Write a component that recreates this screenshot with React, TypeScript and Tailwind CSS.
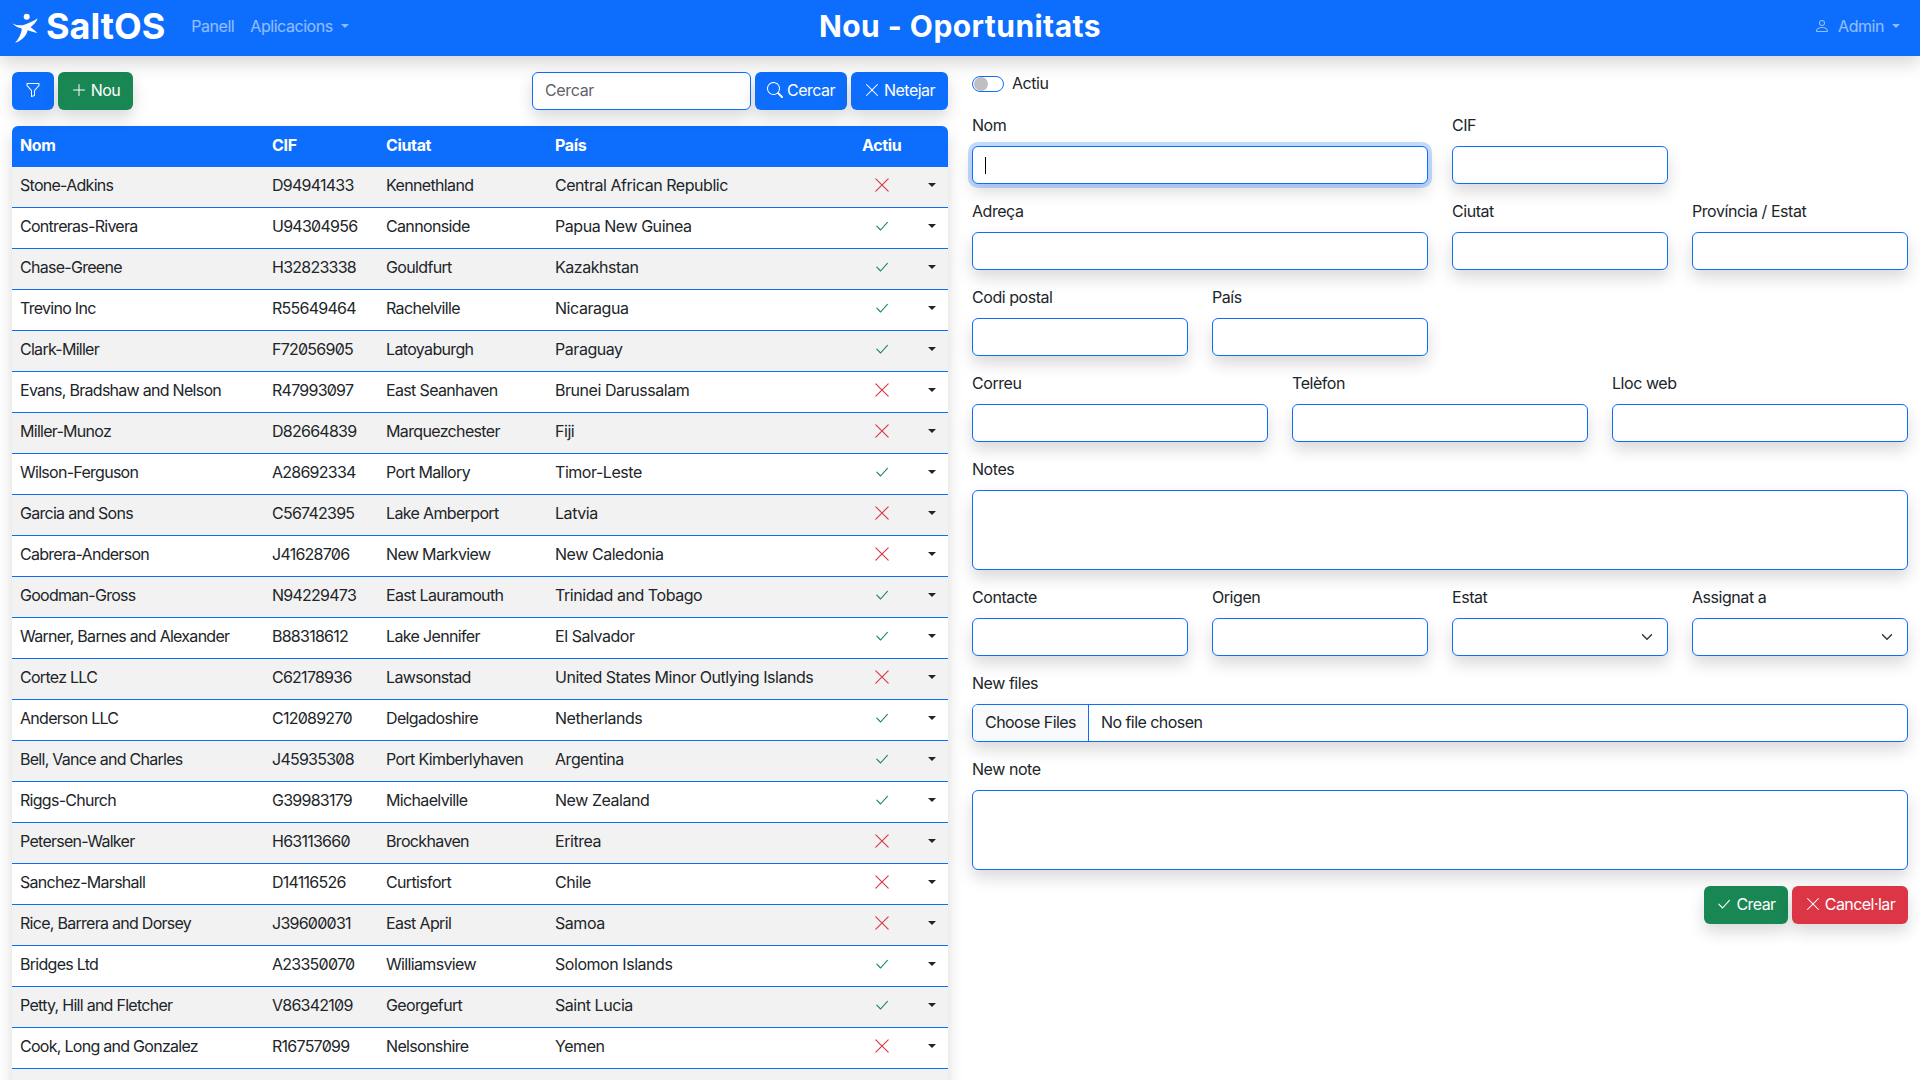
import React from "react";

const rows: [string, string, string, string, boolean][] = [
  ["Stone-Adkins", "D94941433", "Kennethland", "Central African Republic", false],
  ["Contreras-Rivera", "U94304956", "Cannonside", "Papua New Guinea", true],
  ["Chase-Greene", "H32823338", "Gouldfurt", "Kazakhstan", true],
  ["Trevino Inc", "R55649464", "Rachelville", "Nicaragua", true],
  ["Clark-Miller", "F72056905", "Latoyaburgh", "Paraguay", true],
  ["Evans, Bradshaw and Nelson", "R47993097", "East Seanhaven", "Brunei Darussalam", false],
  ["Miller-Munoz", "D82664839", "Marquezchester", "Fiji", false],
  ["Wilson-Ferguson", "A28692334", "Port Mallory", "Timor-Leste", true],
  ["Garcia and Sons", "C56742395", "Lake Amberport", "Latvia", false],
  ["Cabrera-Anderson", "J41628706", "New Markview", "New Caledonia", false],
  ["Goodman-Gross", "N94229473", "East Lauramouth", "Trinidad and Tobago", true],
  ["Warner, Barnes and Alexander", "B88318612", "Lake Jennifer", "El Salvador", true],
  ["Cortez LLC", "C62178936", "Lawsonstad", "United States Minor Outlying Islands", false],
  ["Anderson LLC", "C12089270", "Delgadoshire", "Netherlands", true],
  ["Bell, Vance and Charles", "J45935308", "Port Kimberlyhaven", "Argentina", true],
  ["Riggs-Church", "G39983179", "Michaelville", "New Zealand", true],
  ["Petersen-Walker", "H63113660", "Brockhaven", "Eritrea", false],
  ["Sanchez-Marshall", "D14116526", "Curtisfort", "Chile", false],
  ["Rice, Barrera and Dorsey", "J39600031", "East April", "Samoa", false],
  ["Bridges Ltd", "A23350070", "Williamsview", "Solomon Islands", true],
  ["Petty, Hill and Fletcher", "V86342109", "Georgefurt", "Saint Lucia", true],
  ["Cook, Long and Gonzalez", "R16757099", "Nelsonshire", "Yemen", false],
];

const X = ({ s = 16, c = "currentColor" }: { s?: number; c?: string }) => (
  <svg width={s} height={s} viewBox="0 0 16 16" fill={c}>
    <path d="M2.146 2.854a.5.5 0 1 1 .708-.708L8 7.293l5.146-5.147a.5.5 0 0 1 .708.708L8.707 8l5.147 5.146a.5.5 0 0 1-.708.708L8 8.707l-5.146 5.147a.5.5 0 0 1-.708-.708L7.293 8 2.146 2.854Z" />
  </svg>
);
const Check = ({ s = 16, c = "currentColor" }: { s?: number; c?: string }) => (
  <svg width={s} height={s} viewBox="0 0 16 16" fill="none" stroke={c} strokeWidth="1.1" strokeLinecap="round" strokeLinejoin="round">
    <path d="M2.8 8.2 6.6 12 13.4 4.4" />
  </svg>
);
const Caret = ({ color = "#212529" }: { color?: string }) => (
  <span className="inline-block w-0 h-0 border-x-[4.8px] border-x-transparent border-t-[4.8px]" style={{ borderTopColor: color }} />
);

const shadow = "shadow-[0_8px_16px_rgba(0,0,0,0.15)]";
const ctl = `w-full h-[38px] block bg-white border border-[#0d6efd] rounded-md ${shadow}`;

const Field = ({ label, span, children }: { label: string; span: string; children?: React.ReactNode }) => (
  <div className={`${span} mb-4`}>
    <div className="h-6 mb-2 leading-[22px]">{label}</div>
    {children ?? <div className={ctl} />}
  </div>
);

const Select = () => (
  <div className={`${ctl} flex items-center justify-end pr-[14px]`}>
    <svg width="12" height="12" viewBox="0 0 16 16" fill="none" stroke="#343a40" strokeWidth="2" strokeLinecap="round" strokeLinejoin="round">
      <path d="m2 5 6 6 6-6" />
    </svg>
  </div>
);

const Btn = ({ bg, children, w }: { bg: string; children: React.ReactNode; w: string }) => (
  <button className={`h-[38px] ${w} ${bg} ${shadow} rounded-md text-white flex items-center justify-center pb-[2px] tracking-[-0.55px]`}>{children}</button>
);

export default function App() {
  return (
    <div className="h-screen overflow-hidden bg-white text-[#212529] text-[16px] tracking-[-0.45px] slashed-zero" style={{ fontFamily: "Inter, 'Noto Sans', sans-serif" }}>
      <nav className={`relative z-10 h-14 bg-[#0d6efd] ${shadow} grid grid-cols-[1fr_auto_1fr] items-center pl-3 pr-3 pb-[4px]`}>
        <div className="flex items-center">
          <svg width="30" height="32" viewBox="0 0 30 32" fill="white" className="mr-[4px] mt-[4px]">
            <circle cx="14.7" cy="4.7" r="3" />
            <path d="M0.5 11.4 C5 13.6 9 13.8 13 12.4 C17 11 22 9.2 25.7 6.3 C24.5 10 21.5 13 18.6 15.2 C21 17 23.4 18.8 25.4 21 C22.4 20.4 18.6 19.4 15.6 18.2 C14.6 23.6 10 28.6 3 30.8 C6.6 27 9.4 21.6 9.8 16.4 C6.4 15.6 3 14 0.5 11.4 Z" />
          </svg>
          <span className="text-white font-bold text-[36px] leading-none tracking-normal">SaltOS</span>
          <span className="ml-[26px] text-white/55">Panell</span>
          <span className="ml-4 text-white/55 flex items-center gap-[8px]">Aplicacions <Caret color="rgba(255,255,255,.55)" /></span>
        </div>
        <span className="text-center text-white font-bold text-[30px] tracking-[0.45px]">Nou - Oportunitats</span>
        <div className="flex justify-end pr-2">
          <span className="text-white/55 flex items-center">
            <svg width="16" height="16" viewBox="0 0 16 16" fill="currentColor" className="mr-[8px]">
              <path d="M8 8a3 3 0 1 0 0-6 3 3 0 0 0 0 6zm2-3a2 2 0 1 1-4 0 2 2 0 0 1 4 0zm4 8c0 1-1 1-1 1H3s-1 0-1-1 1-4 6-4 6 3 6 4zm-1-.004c-.001-.246-.154-.986-.832-1.664C11.516 10.68 10.289 10 8 10c-2.29 0-3.516.68-4.168 1.332-.678.678-.83 1.418-.832 1.664h10z" />
            </svg>
            Admin
            <span className="ml-[8px] flex"><Caret color="rgba(255,255,255,.55)" /></span>
          </span>
        </div>
      </nav>

      <div className="grid grid-cols-2 gap-x-6 px-3 pt-4">
        <div>
          <div className="flex items-center mb-4">
            <Btn bg="bg-[#0d6efd]" w="w-[42px]">
              <svg width="16" height="16" viewBox="0 0 16 16" fill="currentColor">
                <path d="M1.5 1.5A.5.5 0 0 1 2 1h12a.5.5 0 0 1 .5.5v2a.5.5 0 0 1-.128.334L10 8.692V13.5a.5.5 0 0 1-.342.474l-3 1A.5.5 0 0 1 6 14.5V8.692L1.628 3.834A.5.5 0 0 1 1.5 3.5v-2zm1 .5v1.308l4.372 4.858A.5.5 0 0 1 7 8.5v5.306l2-.666V8.5a.5.5 0 0 1 .128-.334L13.5 3.308V2h-11z" />
              </svg>
            </Btn>
            <div className="ml-1">
              <Btn bg="bg-[#198754]" w="w-[75px]">
                <svg width="16" height="16" viewBox="0 0 16 16" fill="currentColor" className="mr-1">
                  <path d="M8 2a.5.5 0 0 1 .5.5v5h5a.5.5 0 0 1 0 1h-5v5a.5.5 0 0 1-1 0v-5h-5a.5.5 0 0 1 0-1h5v-5A.5.5 0 0 1 8 2Z" />
                </svg>
                Nou
              </Btn>
            </div>
            <div className={`ml-auto w-[219px] h-[38px] flex items-center px-3 pb-[2px] tracking-[-0.35px] bg-white border border-[#0d6efd] rounded-md text-[#5f6368] ${shadow}`}>Cercar</div>
            <div className="ml-1">
              <Btn bg="bg-[#0d6efd]" w="w-[92px]">
                <svg width="16" height="16" viewBox="0 0 16 16" fill="currentColor" className="mr-1">
                  <path d="M11.742 10.344a6.5 6.5 0 1 0-1.397 1.398h-.001c.03.04.062.078.098.115l3.85 3.85a1 1 0 0 0 1.415-1.414l-3.85-3.85a1.007 1.007 0 0 0-.115-.1zM12 6.5a5.5 5.5 0 1 1-11 0 5.5 5.5 0 0 1 11 0z" />
                </svg>
                Cercar
              </Btn>
            </div>
            <div className="ml-1">
              <Btn bg="bg-[#0d6efd]" w="w-[97px]"><span className="mr-1"><X /></span>Netejar</Btn>
            </div>
          </div>

          <div className={`${shadow} rounded-t-md`}>
            <table className="w-full table-fixed border-separate border-spacing-0">
              <colgroup>
                <col className="w-[252px]" />
                <col className="w-[114px]" />
                <col className="w-[169px]" />
                <col className="w-[307px]" />
                <col className="w-[58px]" />
                <col className="w-[36px]" />
              </colgroup>
              <thead>
                <tr className="bg-[#0d6efd] text-white font-bold text-left h-[41px] tracking-[-0.35px]">
                  <th className="px-2 pb-1 rounded-tl-md">Nom</th>
                  <th className="px-2 pb-1">CIF</th>
                  <th className="px-2 pb-1">Ciutat</th>
                  <th className="px-2 pb-1">País</th>
                  <th className="px-2 pb-1">Actiu</th>
                  <th className="rounded-tr-md"></th>
                </tr>
              </thead>
              <tbody>
                {rows.map((r, i) => (
                  <tr key={r[1]} className={`h-[41px] ${i % 2 === 0 ? "bg-[#f2f2f2]" : "bg-white"}`}>
                    <td className="px-2 pb-[4px] border-b border-[#0d6efd] whitespace-nowrap tracking-[-0.72px]">{r[0]}</td>
                    <td className="px-2 pb-[4px] border-b border-[#0d6efd] tracking-[-0.75px]">{r[1]}</td>
                    <td className="px-2 pb-[4px] border-b border-[#0d6efd] whitespace-nowrap tracking-[-0.65px]">{r[2]}</td>
                    <td className="px-2 pb-[4px] border-b border-[#0d6efd] whitespace-nowrap tracking-[-0.45px]">{r[3]}</td>
                    <td className="pb-[4px] border-b border-[#0d6efd]">
                      <span className="flex justify-center pr-[2px]">
                        {r[4] ? <Check s={16} c="#198754" /> : <X s={18} c="#dc3545" />}
                      </span>
                    </td>
                    <td className="border-b border-[#0d6efd]">
                      <span className="flex justify-center pb-[5px] pl-[4px]"><Caret /></span>
                    </td>
                  </tr>
                ))}
                <tr className="h-[41px] bg-[#f2f2f2]"><td colSpan={6}></td></tr>
              </tbody>
            </table>
          </div>
        </div>

        <div>
          <div className="h-6 mb-[18px] flex items-center">
            <span className="w-8 h-4 rounded-full border border-[#0d6efd] bg-white flex items-center pl-[1px] mr-2">
              <span className="w-[14px] h-[14px] rounded-full bg-[#bfbfbf]" />
            </span>
            <span className="pb-[2px]">Actiu</span>
          </div>
          <div className="grid grid-cols-12 gap-x-6">
            <Field label="Nom" span="col-span-6">
              <div className="relative">
                <div className={`w-full h-[38px] bg-white border border-[#0d6efd] rounded-md shadow-[0_0_0_4px_rgba(13,110,253,0.25),0_8px_16px_rgba(0,0,0,0.15)]`} />
                <span className="absolute left-[13px] top-[11px] w-px h-[17px] bg-black" />
              </div>
            </Field>
            <Field label="CIF" span="col-span-3" />
            <div className="col-span-3" />
            <Field label="Adreça" span="col-span-6" />
            <Field label="Ciutat" span="col-span-3" />
            <Field label="Província / Estat" span="col-span-3" />
            <Field label="Codi postal" span="col-span-3" />
            <Field label="País" span="col-span-3" />
            <div className="col-span-6" />
            <Field label="Correu" span="col-span-4" />
            <Field label="Telèfon" span="col-span-4" />
            <Field label="Lloc web" span="col-span-4" />
            <Field label="Notes" span="col-span-12"><div className={`${ctl} !h-20`} /></Field>
            <Field label="Contacte" span="col-span-3" />
            <Field label="Origen" span="col-span-3" />
            <Field label="Estat" span="col-span-3"><Select /></Field>
            <Field label="Assignat a" span="col-span-3"><Select /></Field>
            <Field label="New files" span="col-span-12">
              <div className={`${ctl} flex items-center overflow-hidden tracking-[-0.55px]`}>
                <span className="h-full px-3 pb-[2px] flex items-center bg-[#f8f9fa] border-r border-[#0d6efd]">Choose Files</span>
                <span className="ml-3 pb-[2px]">No file chosen</span>
              </div>
            </Field>
            <Field label="New note" span="col-span-12"><div className={`${ctl} !h-20`} /></Field>
          </div>
          <div className="flex justify-end gap-1">
            <Btn bg="bg-[#198754]" w="w-[84px]"><span className="mr-1"><Check /></span>Crear</Btn>
            <Btn bg="bg-[#dc3545]" w="w-[116px]"><span className="mr-1"><X /></span>Cancel·lar</Btn>
          </div>
        </div>
      </div>
    </div>
  );
}
